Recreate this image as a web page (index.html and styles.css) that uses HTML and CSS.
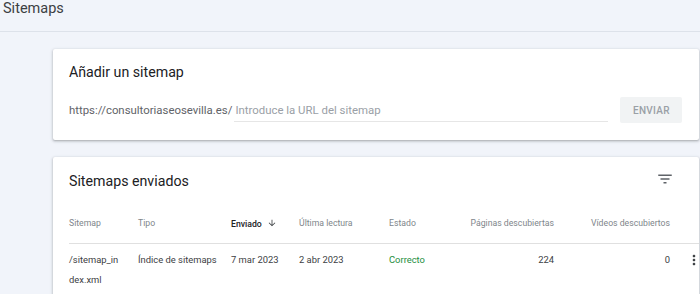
FILE: index.html
```html
<!DOCTYPE html>
<html lang="es">
<head>
    <meta charset="UTF-8">
    <meta name="viewport" content="width=device-width, initial-scale=1.0">
    <title>Sitemaps</title>
    <link rel="stylesheet" href="styles.css">
</head>
<body>
    <div class="page-header">
        <h1>Sitemaps</h1>
    </div>
    <div class="page-body">
        <div class="card add-card">
            <h2 class="card-title">Añadir un sitemap</h2>
            <div class="add-row">
                <span class="domain">https://consultoriaseosevilla.es/</span>
                <input class="url-input" type="text" placeholder="Introduce la URL del sitemap">
                <button class="send-btn" disabled>ENVIAR</button>
            </div>
        </div>

        <div class="card list-card">
            <div class="list-head">
                <h2 class="card-title">Sitemaps enviados</h2>
                <svg class="filter-icon" viewBox="0 0 24 24" width="18" height="18"><path d="M10 18h4v-2h-4v2zM3 6v2h18V6H3zm3 7h12v-2H6v2z"/></svg>
            </div>
            <table class="sitemap-table">
                <colgroup>
                    <col style="width:69px">
                    <col style="width:93px">
                    <col style="width:68px">
                    <col style="width:90px">
                    <col style="width:70px">
                    <col style="width:95px">
                    <col style="width:116px">
                    <col style="width:29px">
                </colgroup>
                <thead>
                    <tr>
                        <th>Sitemap</th>
                        <th>Tipo</th>
                        <th class="sorted">Enviado <svg class="sort-icon" viewBox="0 0 24 24" width="10" height="10"><path d="M20 12l-1.41-1.41L13 16.170V4h-2v12.17l-5.58-5.59L4 12l8 8 8-8z"/></svg></th>
                        <th>Última lectura</th>
                        <th>Estado</th>
                        <th class="num">Páginas descubiertas</th>
                        <th class="num">Vídeos descubiertos</th>
                        <th></th>
                    </tr>
                </thead>
                <tbody>
                    <tr>
                        <td>/sitemap_in<wbr>dex.xml</td>
                        <td>Índice de sitemaps</td>
                        <td>7 mar 2023</td>
                        <td>2 abr 2023</td>
                        <td class="ok">Correcto</td>
                        <td class="num">224</td>
                        <td class="num">0</td>
                        <td class="more">
                            <svg viewBox="0 0 24 24" width="16" height="16"><path d="M12 8c1.1 0 2-.9 2-2s-.9-2-2-2-2 .9-2 2 .9 2 2 2zm0 2c-1.1 0-2 .9-2 2s.9 2 2 2 2-.9 2-2-.9-2-2-2zm0 6c-1.1 0-2 .9-2 2s.9 2 2 2 2-.9 2-2-.9-2-2-2z"/></svg>
                        </td>
                    </tr>
                </tbody>
            </table>
        </div>
    </div>
</body>
</html>
```

FILE: styles.css
```css
* { box-sizing: border-box; }
body { margin: 0; font-family: Roboto, "Liberation Sans", sans-serif; background-color: #f1f4fa; color: #202124; overflow: hidden; }
.page-header { height: 32px; border-bottom: 1px solid #dde2ea; padding: 0 3px; }
.page-header h1 { margin: 0; font-size: 14.5px; font-weight: 400; line-height: 18px; color: #3c4043; }
.page-body { padding: 17px 1px 0 53px; }
.card { background-color: #fff; border-radius: 2px; box-shadow: 0 1px 2px rgba(60, 64, 67, 0.3), 0 1px 3px 1px rgba(60, 64, 67, 0.12); }
.card-title { margin: 0; font-size: 14.2px; font-weight: 400; line-height: 24px; color: #202124; }
.add-card { height: 91px; padding: 11px 16px 0 16px; margin-bottom: 17px; }
.add-row { display: flex; align-items: center; height: 26px; margin-top: 13px; }
.domain { font-size: 11.4px; color: #5f6368; margin-right: 2px; }
.url-input { width: 374px; height: 24px; border: none; border-bottom: 1px solid #e6e6e6; font-family: inherit; font-size: 11.4px; padding: 0 0 0 1px; outline: none; color: #202124; }
.url-input::placeholder { color: #9aa0a6; }
.send-btn { margin-left: 12px; width: 62px; height: 26px; border: none; border-radius: 2px; background-color: #f1f3f4; color: #9aa0a6; font-family: inherit; font-size: 10px; font-weight: 500; letter-spacing: 0.3px; }
.list-card { padding: 12px 0 0 16px; height: 160px; }
.list-head { display: flex; align-items: center; justify-content: space-between; padding-right: 25px; }
.filter-icon { fill: #5f6368; margin-top: -4px; }
.sitemap-table { border-collapse: collapse; table-layout: fixed; margin-top: 11px; font-size: 9.4px; }
.sitemap-table th { text-align: left; font-size: 8.7px; font-weight: 400; color: #80868b; height: 39px; border-bottom: 1px solid #e0e0e0; padding: 0; white-space: nowrap; }
.sitemap-table th.sorted { color: #202124; font-weight: 500; }
.sort-icon { fill: #3c4043; vertical-align: -1px; margin-left: 3px; }
.sitemap-table td { vertical-align: top; padding: 6px 0 0 0; line-height: 20px; color: #3c4043; }
.sitemap-table td:first-child { padding-right: 6px; }
.sitemap-table .num { text-align: right; }
.sitemap-table .ok { color: #1e8e3e; }
.sitemap-table .more { text-align: right; padding-top: 8px; }
.more svg { fill: #3c4043; margin-right: -3px; }
```
